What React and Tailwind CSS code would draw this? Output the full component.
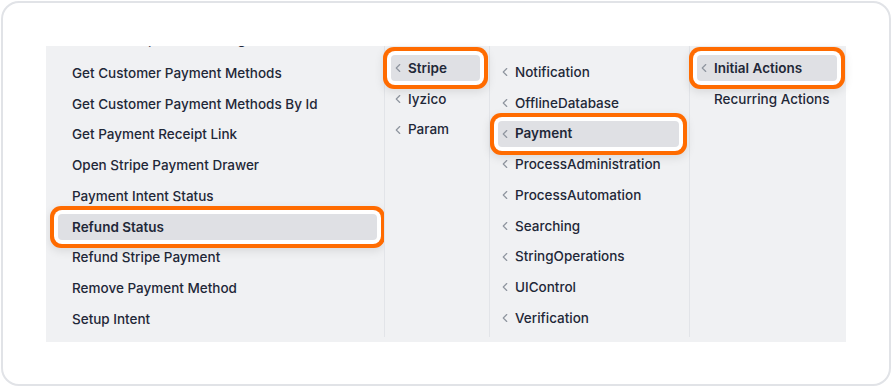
import { ChevronLeft } from 'lucide-react';

const ACTIONS = [
  'Create Setup Intent Settings',
  'Get Customer Payment Methods',
  'Get Customer Payment Methods By Id',
  'Get Payment Receipt Link',
  'Open Stripe Payment Drawer',
  'Payment Intent Status',
  'Refund Status',
  'Refund Stripe Payment',
  'Remove Payment Method',
  'Setup Intent',
];
const PROVIDERS = ['Stripe', 'Iyzico', 'Param'];
const CATEGORIES = [
  'Notification',
  'OfflineDatabase',
  'Payment',
  'ProcessAdministration',
  'ProcessAutomation',
  'Searching',
  'StringOperations',
  'UIControl',
  'Verification',
];
const GROUPS = [
  { name: 'Initial Actions', nested: true },
  { name: 'Recurring Actions', nested: false },
];

// Orange call-out drawn around the active entry of each column
const callout =
  'bg-[#dfe0e4] font-semibold shadow-[0_0_0_4px_#ffffff,0_0_0_8px_#ff6b00,0_3px_10px_8px_rgba(0,0,0,0.10)] relative z-10';

function Item({ label, active, chevron, indent, className = '' }) {
  return (
    <div
      className={`h-[26px] shrink-0 flex items-center gap-[3px] rounded-[4px] ${active ? callout : 'font-medium'} ${className}`}
    >
      {chevron ? (
        <ChevronLeft size={14} strokeWidth={2} className="text-[#8f959f] shrink-0" />
      ) : indent ? (
        <span className="w-[14px] shrink-0" />
      ) : null}
      <span className="whitespace-nowrap">{label}</span>
    </div>
  );
}

export default function App() {
  return (
    <div className="w-[892px] h-[388px] bg-white p-px" style={{ fontFamily: 'Inter, "Noto Sans", sans-serif' }}>
      <div className="h-[385px] w-[890px] rounded-[18px] border-2 border-[#e1e3e7] bg-white">
        <div className="mx-auto mt-[43px] w-[800px] h-[296px] bg-[#f0f1f3] flex pb-[5px] text-[13.5px] text-[#1f2838]">
          <div className="w-[339px] border-r border-[#e2e4e8] overflow-hidden">
            <div className="flex flex-col gap-[4.75px] mt-[-19.5px] pl-[12px] pr-[7px]">
              {ACTIONS.map((a, i) => (
                <Item
                  key={a}
                  label={a}
                  active={a === 'Refund Status'}
                  className={i === 0 ? 'pl-[14px] mb-[2.75px]' : 'pl-[14px]'}
                />
              ))}
            </div>
          </div>

          <div className="w-[105px] border-r border-[#e2e4e8]">
            <div className="flex flex-col gap-[4.75px] pt-[9px] pl-[6px] pr-[9px]">
              {PROVIDERS.map((p) => (
                <Item key={p} label={p} active={p === 'Stripe'} chevron />
              ))}
            </div>
          </div>

          <div className="w-[200px] border-r border-[#e2e4e8]">
            <div className="flex flex-col gap-[4.75px] pt-[13px] pl-[8px] pr-[10px]">
              {CATEGORIES.map((c) => (
                <Item key={c} label={c} active={c === 'Payment'} chevron />
              ))}
            </div>
          </div>

          <div className="flex-1">
            <div className="flex flex-col gap-[4.75px] pt-[9px] pl-[7px] pr-[9px]">
              {GROUPS.map((g) => (
                <Item key={g.name} label={g.name} active={g.nested} chevron={g.nested} indent />
              ))}
            </div>
          </div>
        </div>
      </div>
    </div>
  );
}
